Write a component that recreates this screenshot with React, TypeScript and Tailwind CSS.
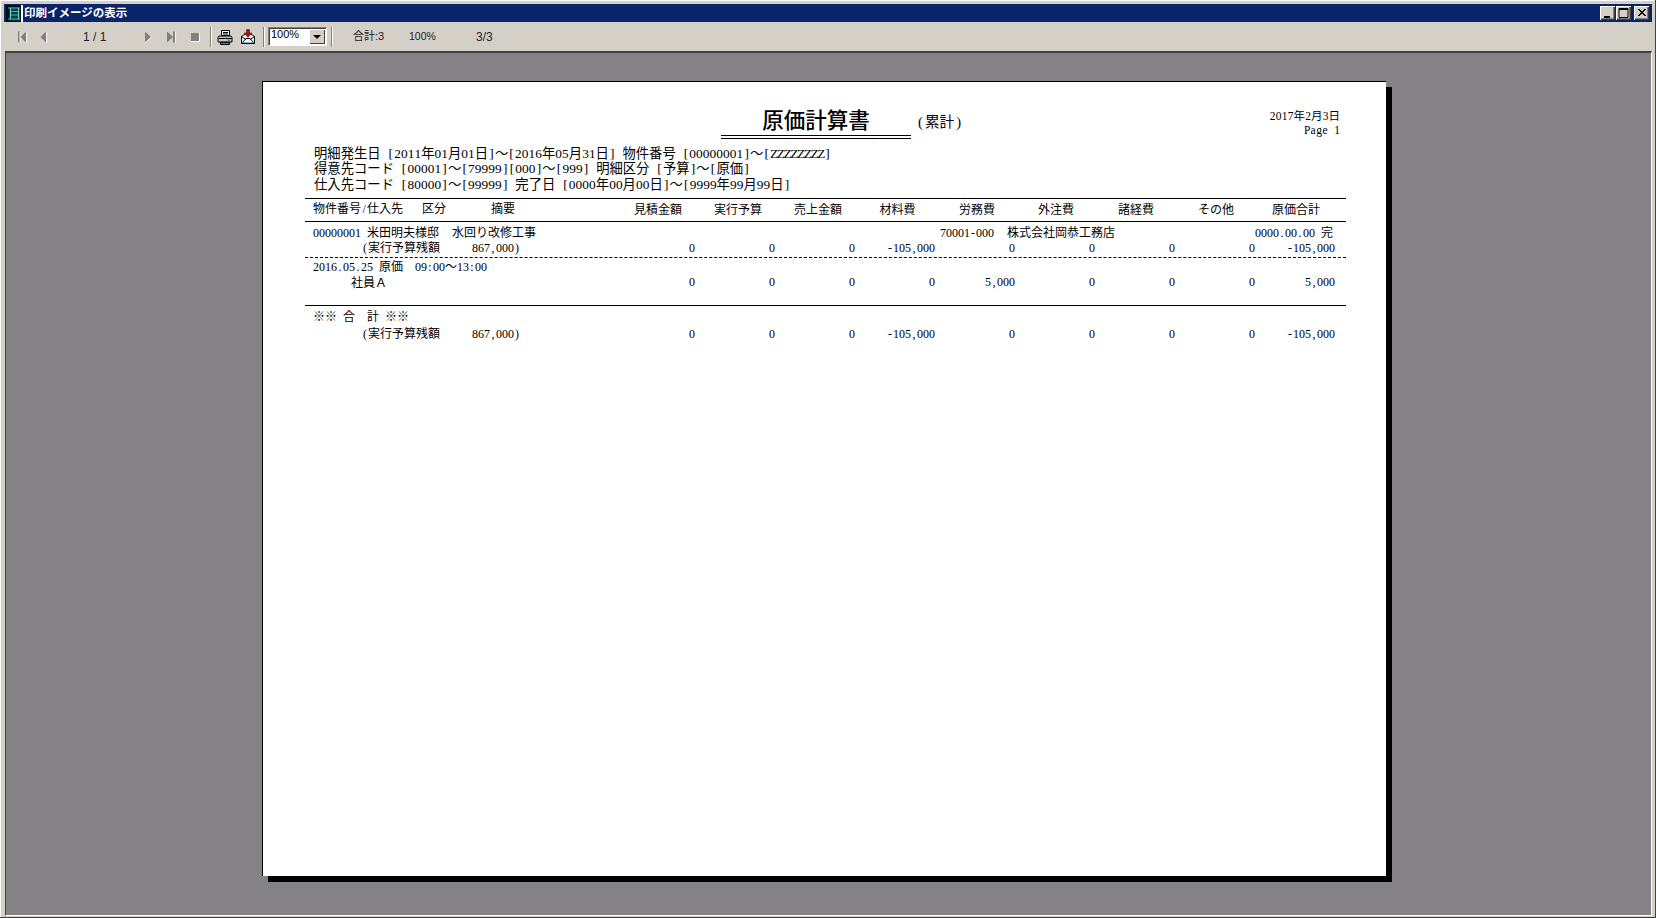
import type { ReactNode } from "react";

const INK = "#000";

// half-width characters sit in a fixed cell, like the bitmap font of the report
function Han({ text, cell = "w-[6px]" }: { text: string; cell?: string }) {
  return (
    <>
      {Array.from(text).map((ch, i) =>
        ch.charCodeAt(0) < 128 ? (
          <span key={i} className={`inline-block text-center font-['Liberation_Serif',serif] ${cell}`}>
            {ch === " " ? "\u00a0" : ch}
          </span>
        ) : (
          <span key={i} className="inline-block">{ch}</span>
        )
      )}
    </>
  );
}

const cols = "grid grid-cols-[310px_repeat(9,80px)] h-[15px] items-center leading-[15px]";

const headers = [
  { label: "見積金額", cls: "pl-[6px]" },
  { label: "実行予算", cls: "pl-[6px]" },
  { label: "売上金額", cls: "pl-[6px]" },
  { label: "材料費", cls: "pl-[5px]" },
  { label: "労務費", cls: "pl-[4px]" },
  { label: "外注費", cls: "pl-[2px]" },
  { label: "諸経費", cls: "pl-[2px]" },
  { label: "その他", cls: "pl-[2px]" },
  { label: "原価合計", cls: "pl-[2px]" },
];

function Amounts({ values }: { values: string[] }) {
  return (
    <>
      {values.map((v, i) => (
        <div key={i} className="text-right">
          <Han text={v} />
        </div>
      ))}
    </>
  );
}

function Sep({ className }: { className: string }) {
  return <div className={`h-[20px] w-[2px] shrink-0 border-r border-l border-r-white border-l-[#808080] ${className}`} />;
}

function NavIcon({ children, className }: { children: ReactNode; className: string }) {
  return (
    <svg viewBox="0 0 12 14" width="12" height="14" className={`shrink-0 ${className}`}>
      {children}
    </svg>
  );
}

function PrinterIcon() {
  return (
    <svg viewBox="0 0 16 16" width="16" height="16" className="ml-[5px] shrink-0">
      <path d="M4.5 1.5h8v5h-8z" fill="#fff" stroke="#000" />
      <path d="M6 3.5h5M6 5h5" stroke="#000" />
      <path d="M2 7h12l1 1.5v4.5H1V8.5z" fill="#c0c0c0" stroke="#000" />
      <path d="M1.5 9.5h13" stroke="#000" />
      <rect x="11" y="10.5" width="2" height="1.5" fill="#00c040" />
      <path d="M3.5 13.5h9v2h-9z" fill="#808080" stroke="#000" />
    </svg>
  );
}

function MailIcon() {
  return (
    <svg viewBox="0 0 16 16" width="16" height="16" className="ml-[7px] shrink-0">
      <path d="M1.5 7.5L8 3l6.5 4.5v7h-13z" fill="#fff" stroke="#000" />
      <path d="M1.5 14.5L6 9.5h4l4.5 5M1.5 7.5L6 10.5M14.5 7.5L10 10.5" fill="none" stroke="#000" />
      <path d="M2.5 13.5h11" stroke="#8fb8e0" />
      <path d="M6.5 0.5h3v3.5H12L8 8.5 4 4h2.5z" fill="#a01818" stroke="#600" strokeWidth="0.5" />
    </svg>
  );
}

function AppIcon() {
  return (
    <svg viewBox="0 0 17 17" width="17" height="17" className="shrink-0">
      <rect width="17" height="17" fill="#0a0a14" />
      <rect x="15" width="2" height="17" fill="#fff" />
      <rect x="3" y="2" width="11" height="14" fill="#0b3a50" />
      <path d="M2 3h12M4 6.5h9M4 10h9M2 14h12" stroke="#2fc0a0" strokeWidth="1.2" />
      <path d="M4.5 3v11M12.5 3v11" stroke="#60e0c0" />
    </svg>
  );
}

function WinBtn({ children, className = "" }: { children: ReactNode; className?: string }) {
  return (
    <div
      className={`flex h-[14px] w-[15px] items-center justify-center bg-[#d4d0c8] shadow-[inset_1px_1px_0_#fff,inset_-1px_-1px_0_#404040,inset_-2px_-2px_0_#808080] ${className}`}
    >
      <svg viewBox="0 0 15 14" width="15" height="14">
        {children}
      </svg>
    </div>
  );
}

export default function App() {
  return (
    <div
      className="flex h-[918px] w-[1656px] flex-col overflow-hidden border-r border-b border-r-[#404040] border-b-[#404040] bg-[#d4d0c8] pt-[4px] pr-[3px] pb-[1px] pl-[4px] font-['Liberation_Sans','Noto_Sans_CJK_JP',sans-serif] shadow-[inset_1px_1px_0_#fff]"
    >
      {/* title bar */}
      <div className="flex h-[18px] shrink-0 items-center bg-[#0a246a] pr-[3px] pl-[2px] text-white">
        <AppIcon />
        <span className="ml-[1px] text-[11.5px] leading-[18px] font-bold text-white">印刷イメージの表示</span>
        <div className="ml-auto flex">
          <WinBtn>
            <path d="M4 10h6v2H4z" fill="#000" />
          </WinBtn>
          <WinBtn className="ml-[1px]">
            <path d="M3 2.5h9v9H3zM3 3.5h9" fill="none" stroke="#000" />
          </WinBtn>
          <WinBtn className="ml-[3px]">
            <path d="M4 3l7 7M5 3l7 7M11 3l-7 7M12 3l-7 7" stroke="#000" />
          </WinBtn>
        </div>
      </div>

      {/* toolbar */}
      <div className="-ml-[4px] flex h-[29px] shrink-0 items-center text-[12px] text-[#222]">
        <NavIcon className="ml-[16px]">
          <path d="M2 1.5h2v11H2zM10 1.5v11L4.5 7z" fill="#808080" />
          <path d="M4 2v11M10.8 2v11" stroke="#fff" strokeWidth="0.8" />
        </NavIcon>
        <NavIcon className="ml-[10px]">
          <path d="M8 1.5v11L2.5 7z" fill="#808080" />
          <path d="M8.8 2v11" stroke="#fff" strokeWidth="0.8" />
        </NavIcon>
        <span className="ml-[33px] w-[25px] whitespace-nowrap">1 / 1</span>
        <NavIcon className="ml-[35px]">
          <path d="M2 1.5v11L8 7z" fill="#808080" />
          <path d="M2 13l6.5-6" stroke="#fff" strokeWidth="0.8" />
        </NavIcon>
        <NavIcon className="ml-[10px]">
          <path d="M2 1.5v11L8 7zM8 1.5h2v11H8z" fill="#808080" />
          <path d="M10.6 2v11" stroke="#fff" strokeWidth="0.8" />
        </NavIcon>
        <NavIcon className="ml-[12px]">
          <rect x="2" y="3" width="8" height="8" fill="#808080" />
          <path d="M10.5 3v8.5H2" fill="none" stroke="#fff" />
        </NavIcon>
        <Sep className="ml-[9px]" />
        <PrinterIcon />
        <MailIcon />
        <Sep className="ml-[7px]" />
        <div className="ml-[3px] flex h-[19px] w-[59px] shrink-0 justify-between border border-t-[#808080] border-r-white border-b-white border-l-[#808080] bg-white pr-[1px] shadow-[inset_1px_1px_0_#404040]">
          <span className="pl-[2px] text-[11px] leading-[13px] text-black">100%</span>
          <div className="my-[1px] flex w-[16px] items-center justify-center bg-[#d4d0c8] shadow-[inset_1px_1px_0_#fff,inset_-1px_-1px_0_#404040]">
            <svg viewBox="0 0 8 4" width="8" height="4">
              <path d="M0 0h8L4 4z" fill="#000" />
            </svg>
          </div>
        </div>
        <Sep className="ml-[4px]" />
        <span className="ml-[20px] w-[31px] whitespace-nowrap text-[11px]">合計:3</span>
        <span className="ml-[25px] w-[24px] whitespace-nowrap text-[10.5px]">100%</span>
        <span className="ml-[43px] whitespace-nowrap text-[12px]">3/3</span>
      </div>

      {/* preview area */}
      <div className="ml-[1px] min-h-0 flex-1 overflow-hidden border-t-2 border-r border-b border-l border-t-[#404040] border-r-white border-b-white border-l-[#404040] bg-[#858285] pt-[28px] pl-[256px]">
        <div
          className="h-[795px] w-[1124px] border-t border-l border-black bg-white pt-[24px] font-['Noto_Sans_CJK_JP',sans-serif] text-[12px] shadow-[6px_6px_0_#000]"
          style={{ color: INK }}
        >
          <div className="flex items-start">
            <div className="ml-[458px] h-[33px] w-[190px] border-b-[4px] border-double border-black text-center text-[21.5px] leading-[25px] font-medium">
              原価計算書
            </div>
            <div className="mt-[6px] ml-[5px] text-[14.6px] leading-[18px] whitespace-nowrap">
              <Han text="(" cell="w-[9px]" />累計<Han text=")" cell="w-[9px]" />
            </div>
            <div className="mt-[2px] mr-[46px] ml-auto text-right text-[11.5px] leading-[14px] whitespace-nowrap">
              <div className="h-[14px]"><Han text="2017年2月3日" /></div>
              <div className="h-[14px]"><Han text="Page 1" /></div>
            </div>
          </div>

          {/* search conditions */}
          <div className="mt-[6px] ml-[51px] text-[13.33px] leading-[15.3px] whitespace-nowrap">
            <div className="h-[15.3px]"><Han cell="w-[6.75px]" text="明細発生日 [2011年01月01日]～[2016年05月31日] 物件番号 [00000001]～[ZZZZZZZZ]" /></div>
            <div className="h-[15.3px]"><Han cell="w-[6.75px]" text="得意先コード [00001]～[79999][000]～[999] 明細区分 [予算]～[原価]" /></div>
            <div className="h-[15.3px]"><Han cell="w-[6.75px]" text="仕入先コード [80000]～[99999] 完了日 [0000年00月00日]～[9999年99月99日]" /></div>
          </div>

          {/* table */}
          <div className="mt-[7px] ml-[42px] w-[1041px] whitespace-nowrap">
            <div className="grid h-[24px] grid-cols-[310px_repeat(9,80px)] items-center border-y border-black pb-[2px]">
              <div className="flex">
                <span className="ml-[8px] w-[109px]"><Han text="物件番号/仕入先" /></span>
                <span className="w-[69px]">区分</span>
                <span>摘要</span>
              </div>
              {headers.map((h) => (
                <div key={h.label} className={`text-center ${h.cls}`}>{h.label}</div>
              ))}
            </div>

            <div className={`${cols} mt-[2px]`}>
              <div className="pl-[8px]">
                <Han text="00000001 " />米田明夫様邸
                <span className="ml-[13px]">水回り改修工事</span>
              </div>
              <div className="col-span-4" />
              <div className="col-span-4 pl-[5px]">
                <Han text="70001-000" />
                <span className="ml-[13px]">株式会社岡恭工務店</span>
              </div>
              <div className="pr-[3px] text-right">
                <Han text="0000.00.00 " />完
              </div>
            </div>
            <div className={cols}>
              <div className="flex pl-[57px]">
                <span className="w-[110px]"><Han text="(" />実行予算残額</span>
                <span><Han text="867,000)" /></span>
              </div>
              <Amounts values={["0", "0", "0", "-105,000", "0", "0", "0", "0", "-105,000"]} />
            </div>

            <div className="mt-[3px] border-t border-dashed border-black" />

            <div className={cols}>
              <div className="pl-[8px]">
                <Han text="2016.05.25 " />原価
                <span className="ml-[12px]"><Han text="09:00" />～<Han text="13:00" /></span>
              </div>
            </div>
            <div className={cols}>
              <div className="pl-[46px]">社員Ａ</div>
              <Amounts values={["0", "0", "0", "0", "5,000", "0", "0", "0", "5,000"]} />
            </div>

            <div className="mt-[17px] border-t border-black" />

            <div className={`${cols} mt-[2px]`}>
              <div className="pl-[8px]">※※<span className="ml-[6px]">合</span><span className="ml-[12px]">計</span><span className="ml-[6px]">※※</span></div>
            </div>
            <div className={`${cols} mt-[2px]`}>
              <div className="flex pl-[57px]">
                <span className="w-[110px]"><Han text="(" />実行予算残額</span>
                <span><Han text="867,000)" /></span>
              </div>
              <Amounts values={["0", "0", "0", "-105,000", "0", "0", "0", "0", "-105,000"]} />
            </div>
          </div>
        </div>
      </div>
    </div>
  );
}
